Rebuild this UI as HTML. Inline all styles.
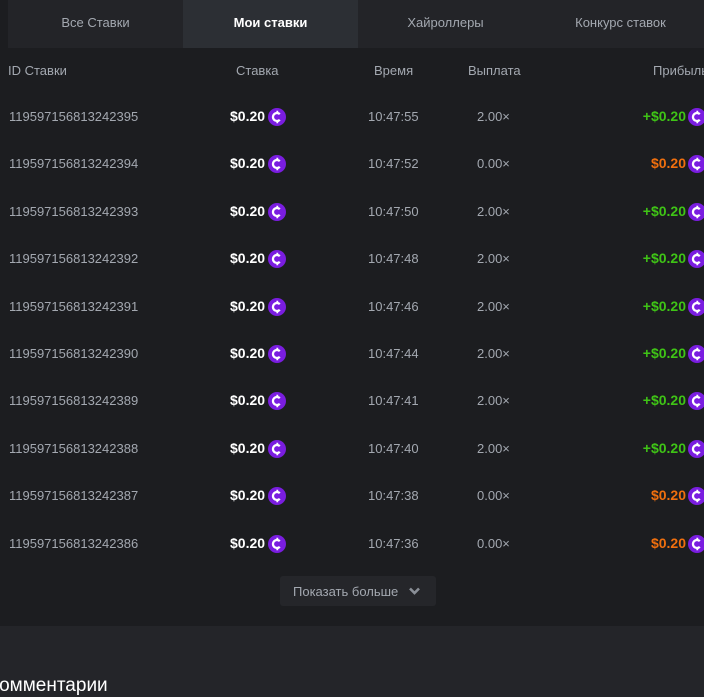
<!DOCTYPE html>
<html><head><meta charset="utf-8"><style>
*{margin:0;padding:0;box-sizing:border-box}
body{width:704px;height:697px;overflow:hidden;background:#1c1d20;font-family:"Liberation Sans","DejaVu Sans",sans-serif;position:relative}
.a{position:absolute;white-space:nowrap}
.tabs{position:absolute;left:8px;top:0;width:696px;height:48px;background:#232428}
.tab{position:absolute;top:0;height:48px;line-height:46px;text-align:center;font-size:13px;color:#a3a8b0}
.act{background:#2c2f34;color:#fff;font-weight:bold}
.h{font-size:13px;color:#a3a8b0;top:63px}
.id{left:9px;font-size:13px;color:#a3a8b0}
.st{left:230px;font-size:14px;color:#fff;font-weight:bold;top:0}
.tm{left:368px;font-size:13px;color:#a3a8b0}
.py{left:477px;font-size:13px;color:#a3a8b0}
.pr{right:18px;font-size:14px;font-weight:bold;text-align:right}
.g{color:#3fc416}.o{color:#f06f0e}
svg.c{position:absolute;width:18px;height:18px}
</style></head><body>
<div class="tabs">
<div class="tab" style="left:0;width:175px">Все Ставки</div>
<div class="tab act" style="left:175px;width:175px">Мои ставки</div>
<div class="tab" style="left:350px;width:175px">Хайроллеры</div>
<div class="tab" style="left:525px;width:175px">Конкурс ставок</div>
</div>
<div class="a h" style="left:8px">ID Ставки</div>
<div class="a h" style="left:236px">Ставка</div>
<div class="a h" style="left:374px">Время</div>
<div class="a h" style="left:468px">Выплата</div>
<div class="a h" style="left:653px">Прибыль</div>
<div id="rows"></div>
<div class="a" style="left:280px;top:576px;width:156px;height:30px;background:#25262a;border-radius:3px;color:#a3a8b0;font-size:13px;line-height:31px;padding-left:13px">Показать больше
<svg style="position:absolute;left:128px;top:10px" width="13" height="10" viewBox="0 0 13 10"><path d="M2 2.5l4.5 4.5 4.5-4.5" stroke="#8a8f97" stroke-width="2.6" fill="none"/></svg></div>
<div class="a" style="left:0;top:626px;width:704px;height:71px;background:#242529"></div>
<div class="a" style="left:-12px;top:675px;font-size:19px;color:#fff">Комментарии</div>
<script>
var d=[["395","10:47:55","2.00",1],["394","10:47:52","0.00",0],["393","10:47:50","2.00",1],["392","10:47:48","2.00",1],["391","10:47:46","2.00",1],["390","10:47:44","2.00",1],["389","10:47:41","2.00",1],["388","10:47:40","2.00",1],["387","10:47:38","0.00",0],["386","10:47:36","0.00",0]];
function c(x,y){return '<svg class="c" style="left:'+x+'px;top:'+y+'px" viewBox="0 0 18 18"><circle cx="9" cy="9" r="9" fill="#7a1de0"/><path d="M11.8 6.2A4 4 0 1 0 11.8 11.8" stroke="#fff" stroke-width="2.3" fill="none"/><path d="M9.3 2.8v2.4M9.3 12.8v2.4" stroke="#fff" stroke-width="1.8"/></svg>';}
var h='';
d.forEach(function(r,i){var y=Math.round(117+i*47.4);var t=y-8;
h+='<div class="a id" style="top:'+t+'px">119597156813242'+r[0]+'</div>';
h+='<div class="a st" style="top:'+(t-1)+'px">$0.20</div>'+c(268,y-9);
h+='<div class="a tm" style="top:'+t+'px">'+r[1]+'</div>';
h+='<div class="a py" style="top:'+t+'px">'+r[2]+'×</div>';
h+='<div class="a pr '+(r[3]?'g':'o')+'" style="top:'+(t-1)+'px">'+(r[3]?'+':'')+'$0.20</div>'+c(688,y-9);
});
document.getElementById('rows').innerHTML=h;
</script>
</body></html>
